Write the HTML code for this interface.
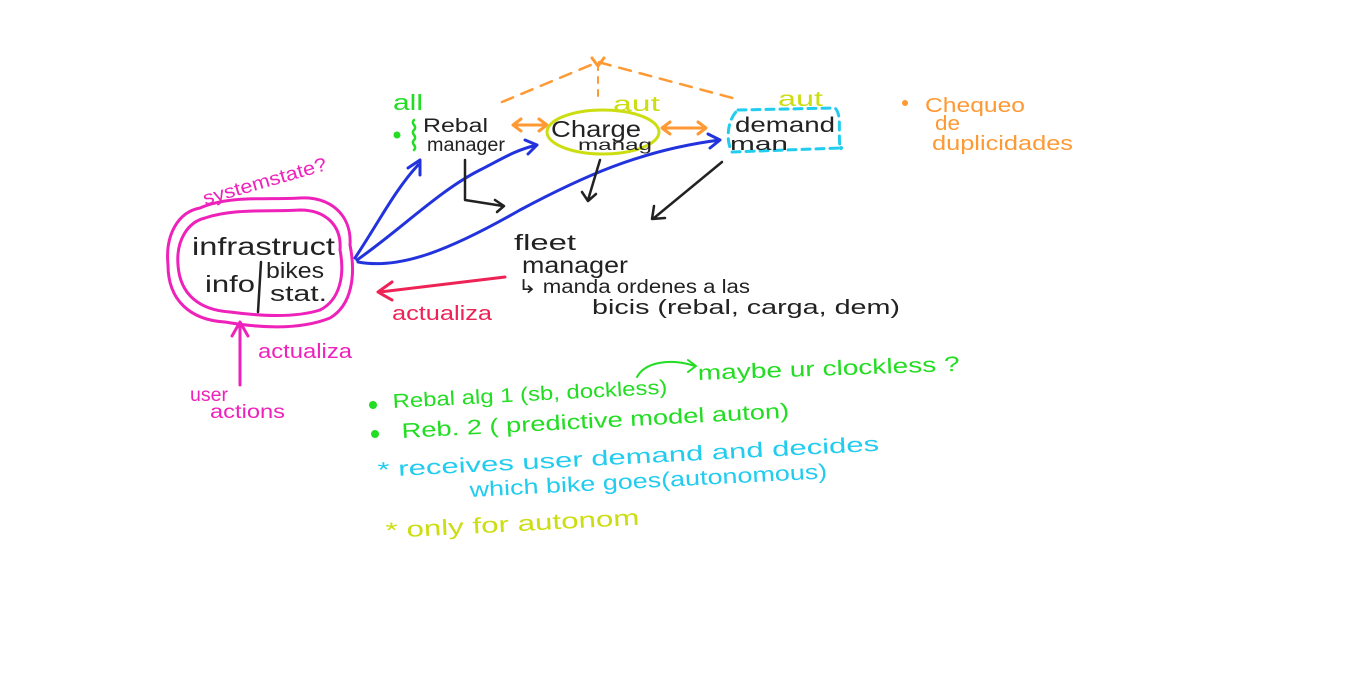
<!DOCTYPE html>
<html><head><meta charset="utf-8"><style>
html,body{margin:0;padding:0;background:#fff;width:1366px;height:685px;overflow:hidden}
svg{display:block}
text{font-family:"Liberation Sans",sans-serif;}
</style></head><body>
<svg width="1366" height="685" viewBox="0 0 1366 685" xmlns="http://www.w3.org/2000/svg">
<g fill="none" stroke-linecap="round" stroke-linejoin="round">
<path d="M200 208 C230 195 270 200 300 198 C330 196 352 215 350 245 C356 275 352 305 330 318 C300 330 260 328 225 322 C190 320 168 300 168 265 C165 235 178 212 200 208 Z" stroke="#ee22bb" stroke-width="3"/>
<path d="M205 218 C235 208 270 212 300 210 C325 210 342 225 340 250 C345 275 340 300 320 310 C295 318 260 316 230 312 C200 310 180 295 178 265 C176 240 188 222 205 218 Z" stroke="#ee22bb" stroke-width="3"/>
<path d="M240 385 L240 325 M232 336 L240 322 L248 336" stroke="#ee22bb" stroke-width="3"/>
<path d="M261 262 L258 312" stroke="#222" stroke-width="2.5"/>
<path d="M355 258 C380 220 395 190 418 165 M408 168 L420 160 L420 175" stroke="#2233dd" stroke-width="3"/>
<path d="M357 260 C400 230 440 190 480 170 C500 160 515 150 537 145 M525 140 L537 145 L528 154" stroke="#2233dd" stroke-width="3"/>
<path d="M358 262 C400 270 450 250 520 210 C580 178 640 150 720 140 M708 134 L720 140 L710 148" stroke="#2233dd" stroke-width="3"/>
<circle cx="397" cy="135" r="3.5" fill="#22dd22" stroke="none"/>
<path d="M414 120 c-4 4 4 6 0 10 c-4 4 4 6 0 10 c-4 4 4 6 0 10" stroke="#22dd22" stroke-width="2.5"/>
<path d="M515 125 L545 125 M521 119 L513 125 L521 131 M539 119 L547 125 L539 131" stroke="#ff9933" stroke-width="3"/>
<path d="M664 128 L704 128 M670 122 L662 128 L670 134 M698 122 L706 128 L698 134" stroke="#ff9933" stroke-width="3"/>
<path d="M502 102 L598 62 L740 100" stroke="#ff9933" stroke-width="2.5" stroke-dasharray="12 9"/>
<path d="M598 64 L598 100" stroke="#ff9933" stroke-width="2" stroke-dasharray="6 7"/>
<path d="M592 58 L598 66 L604 58" stroke="#ff9933" stroke-width="3"/>
<circle cx="905" cy="103" r="3" fill="#ff9933" stroke="none"/>
<ellipse cx="603" cy="132" rx="56" ry="22" stroke="#ccdd11" stroke-width="3"/>
<path d="M738 110 L835 108 C842 115 838 130 840 148 L732 152 C725 140 728 118 738 110 Z" stroke="#22ccee" stroke-width="3" stroke-dasharray="8 6"/>
<circle cx="841" cy="148" r="2" fill="#22ccee" stroke="none"/>
<path d="M465 160 L465 200 L503 206 M495 200 L504 206 L497 212" stroke="#222" stroke-width="2.5"/>
<path d="M600 160 L588 200 M582 192 L588 201 L596 194" stroke="#222" stroke-width="2.5"/>
<path d="M722 162 L654 218 M654 206 L652 219 L665 218" stroke="#222" stroke-width="2.5"/>
<path d="M505 277 L380 292 M392 282 L378 292 L392 300" stroke="#ee2255" stroke-width="3"/>
<path d="M637 377 C645 362 670 358 695 366 M688 360 L696 366 L688 372" stroke="#22dd22" stroke-width="2"/>
<circle cx="373" cy="405" r="4" fill="#22dd22" stroke="none"/>
<circle cx="375" cy="434" r="4" fill="#22dd22" stroke="none"/>
</g>
<g>
<text lengthAdjust="spacingAndGlyphs" x="205" y="205" fill="#ee22bb" font-size="19" textLength="128" transform="rotate(-16 205 205)">systemstate?</text>
<text lengthAdjust="spacingAndGlyphs" x="192" y="255" fill="#222" font-size="25" textLength="143">infrastruct</text>
<text lengthAdjust="spacingAndGlyphs" x="205" y="292" fill="#222" font-size="23" textLength="50">info</text>
<text lengthAdjust="spacingAndGlyphs" x="266" y="278" fill="#222" font-size="22" textLength="58">bikes</text>
<text lengthAdjust="spacingAndGlyphs" x="270" y="301" fill="#222" font-size="22" textLength="57">stat.</text>
<text lengthAdjust="spacingAndGlyphs" x="258" y="358" fill="#ee22bb" font-size="20" textLength="94">actualiza</text>
<text lengthAdjust="spacingAndGlyphs" x="190" y="401" fill="#ee22bb" font-size="19" textLength="38">user</text>
<text lengthAdjust="spacingAndGlyphs" x="210" y="418" fill="#ee22bb" font-size="19" textLength="75">actions</text>
<text lengthAdjust="spacingAndGlyphs" x="393" y="110" fill="#22dd22" font-size="22" textLength="30">all</text>
<text lengthAdjust="spacingAndGlyphs" x="423" y="132" fill="#222" font-size="19" textLength="65">Rebal</text>
<text lengthAdjust="spacingAndGlyphs" x="427" y="151" fill="#222" font-size="19" textLength="78">manager</text>
<text lengthAdjust="spacingAndGlyphs" x="551" y="137" fill="#222" font-size="23" textLength="90">Charge</text>
<text lengthAdjust="spacingAndGlyphs" x="578" y="150" fill="#222" font-size="16" textLength="74">manag</text>
<text lengthAdjust="spacingAndGlyphs" x="613" y="111" fill="#ccdd11" font-size="21" textLength="47">aut</text>
<text lengthAdjust="spacingAndGlyphs" x="778" y="106" fill="#ccdd11" font-size="21" textLength="45">aut</text>
<text lengthAdjust="spacingAndGlyphs" x="735" y="132" fill="#222" font-size="21" textLength="100">demand</text>
<text lengthAdjust="spacingAndGlyphs" x="730" y="150" fill="#222" font-size="18" textLength="58">man</text>
<text lengthAdjust="spacingAndGlyphs" x="925" y="112" fill="#ff9933" font-size="20" textLength="100">Chequeo</text>
<text lengthAdjust="spacingAndGlyphs" x="935" y="130" fill="#ff9933" font-size="20" textLength="25">de</text>
<text lengthAdjust="spacingAndGlyphs" x="932" y="150" fill="#ff9933" font-size="20" textLength="141">duplicidades</text>
<text lengthAdjust="spacingAndGlyphs" x="514" y="250" fill="#222" font-size="22" textLength="62">fleet</text>
<text lengthAdjust="spacingAndGlyphs" x="522" y="273" fill="#222" font-size="23" textLength="106">manager</text>
<text lengthAdjust="spacingAndGlyphs" x="518" y="293" fill="#222" font-size="19" textLength="232">↳ manda ordenes a las</text>
<text lengthAdjust="spacingAndGlyphs" x="592" y="314" fill="#222" font-size="20" textLength="308">bicis (rebal, carga, dem)</text>
<text lengthAdjust="spacingAndGlyphs" x="392" y="320" fill="#ee2255" font-size="20" textLength="100">actualiza</text>
<text lengthAdjust="spacingAndGlyphs" x="393" y="408" fill="#22dd22" font-size="20" textLength="275" transform="rotate(-3 393 408)">Rebal alg 1 (sb, dockless)</text>
<text lengthAdjust="spacingAndGlyphs" x="698" y="380" fill="#22dd22" font-size="21" textLength="262" transform="rotate(-2 698 380)">maybe ur clockless ?</text>
<text lengthAdjust="spacingAndGlyphs" x="402" y="438" fill="#22dd22" font-size="21" textLength="388" transform="rotate(-3 402 438)">Reb. 2 ( predictive model auton)</text>
<text lengthAdjust="spacingAndGlyphs" x="378" y="477" fill="#22ccee" font-size="21" textLength="502" transform="rotate(-3 378 477)">* receives user demand and decides</text>
<text lengthAdjust="spacingAndGlyphs" x="470" y="497" fill="#22ccee" font-size="21" textLength="358" transform="rotate(-3 470 497)">which bike goes(autonomous)</text>
<text lengthAdjust="spacingAndGlyphs" x="386" y="538" fill="#ccdd11" font-size="22" textLength="254" transform="rotate(-3 386 538)">* only for autonom</text>
</g>
</svg>
</body></html>
